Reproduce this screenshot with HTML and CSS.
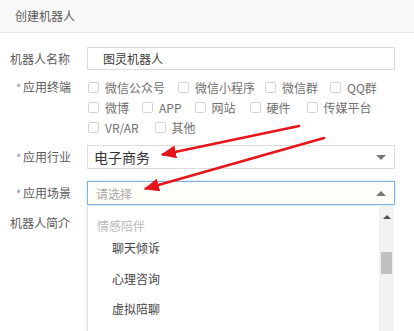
FILE: index.html
```html
<!DOCTYPE html>
<html lang="zh">
<head>
<meta charset="utf-8">
<link rel="stylesheet" href="styles.css">
</head>
<body>
<div class="page">
  <div class="header">创建机器人</div>
  <div class="form">
    <div class="row row-name">
      <div class="label">机器人名称</div>
      <div class="field"><div class="input">图灵机器人</div></div>
    </div>
    <div class="row row-terminal">
      <div class="label"><span class="req">*</span>应用终端</div>
      <div class="field checks">
        <div class="check-line">
          <label class="cb"><span class="box"></span>微信公众号</label>
          <label class="cb"><span class="box"></span>微信小程序</label>
          <label class="cb"><span class="box"></span>微信群</label>
          <label class="cb"><span class="box"></span>QQ群</label>
        </div>
        <div class="check-line">
          <label class="cb"><span class="box"></span>微博</label>
          <label class="cb"><span class="box"></span>APP</label>
          <label class="cb"><span class="box"></span>网站</label>
          <label class="cb"><span class="box"></span>硬件</label>
          <label class="cb"><span class="box"></span>传媒平台</label>
        </div>
        <div class="check-line">
          <label class="cb"><span class="box"></span>VR/AR</label>
          <label class="cb"><span class="box"></span>其他</label>
        </div>
      </div>
    </div>
    <div class="row row-industry">
      <div class="label"><span class="req">*</span>应用行业</div>
      <div class="field">
        <div class="select"><span class="value">电子商务</span><span class="caret down"></span></div>
      </div>
    </div>
    <div class="row row-scene">
      <div class="label"><span class="req">*</span>应用场景</div>
      <div class="field">
        <div class="select focused"><span class="placeholder">请选择</span><span class="caret up"></span></div>
        <div class="dropdown">
          <div class="options">
            <div class="group">情感陪伴</div>
            <div class="option">聊天倾诉</div>
            <div class="option">心理咨询</div>
            <div class="option">虚拟陪聊</div>
          </div>
          <div class="scrollbar">
            <span class="sb-up"></span>
            <span class="sb-thumb"></span>
          </div>
        </div>
      </div>
    </div>
    <div class="row row-intro">
      <div class="label">机器人简介</div>
      <div class="field"></div>
    </div>
  </div>
  <svg class="arrows" width="414" height="331" viewBox="0 0 414 331">
    <defs>
      <marker id="head" markerWidth="6" markerHeight="5" refX="5" refY="2.5" orient="auto" markerUnits="strokeWidth">
        <path d="M0,0 L6,2.5 L0,5 Z" fill="#e8141b"/>
      </marker>
    </defs>
    <line x1="299" y1="126" x2="163" y2="154.5" stroke="#e8141b" stroke-width="2.6" stroke-linecap="round" marker-end="url(#head)"/>
    <line x1="324" y1="138" x2="146" y2="188.5" stroke="#e8141b" stroke-width="2.6" stroke-linecap="round" marker-end="url(#head)"/>
  </svg>
</div>
</body>
</html>
```
FILE: styles.css
```css
* { box-sizing: border-box; }
html, body { margin: 0; padding: 0; background: #fff; }
body {
  font-family: "Noto Sans CJK SC", "Noto Sans", "Liberation Sans", sans-serif;
  font-size: 12px;
  color: #5a5a5a;
  width: 414px;
  height: 331px;
  overflow: hidden;
}
.page { position: relative; width: 414px; height: 331px; overflow: hidden; }
.header {
  height: 33px;
  line-height: 32px;
  padding-left: 15px;
  background: #f8f8f8;
  border-bottom: 1px solid #e8e8e8;
  color: #5a5a5a;
  font-size: 12px;
}
.form { padding: 14px 19px 0 10px; }
.row { display: grid; grid-template-columns: 77px 1fr; align-items: center; }
.label { font-size: 12px; color: #5a5a5a; line-height: 20px; white-space: nowrap; }
.req { color: #7a8ea8; display: inline-block; width: 7px; margin-left: 6px; font-size: 11px; }
.field { position: relative; }
.input {
  height: 23px;
  line-height: 21px;
  border: 1px solid #ddd;
  padding-left: 15px;
  color: #3a3a3a;
  font-size: 12px;
}
.row-terminal { margin-top: 7px; align-items: start; }
.checks { display: flex; flex-direction: column; }
.check-line { display: flex; height: 20px; align-items: center; }
.cb { display: flex; align-items: center; color: #707070; font-size: 12px; margin-right: 12px; white-space: nowrap; }
.box {
  width: 11px; height: 11px;
  border: 1px solid #d4d4d4;
  border-radius: 2px;
  background: #fff;
  margin: 0 6px 0 1px;
}
.check-line:first-child .cb:nth-child(2) { margin-right: 9px; }
.check-line:first-child .cb:nth-child(3) { margin-right: 11px; }
.check-line:nth-child(2) .cb:nth-child(3) { margin-right: 13px; }
.check-line:nth-child(2) .cb:nth-child(4) { margin-right: 15px; }
.check-line:nth-child(3) .cb:first-child { margin-right: 15px; }
.row-industry { margin-top: 8px; }
.row-scene { margin-top: 12px; }
.select {
  height: 24px;
  border: 1px solid #ddd;
  display: flex;
  align-items: center;
  justify-content: space-between;
  padding: 0 8px 0 6px;
  background: #fff;
}
.select .value { color: #333; font-size: 14px; }
.select.focused {
  border-color: #7fb3e0;
  background: #fffef8;
  box-shadow: 0 0 2px rgba(102,175,233,0.5);
  padding-left: 8px;
}
.placeholder { color: #a8a8a8; font-size: 12px; }
.caret { width: 0; height: 0; border-left: 5px solid transparent; border-right: 5px solid transparent; }
.caret.down { border-top: 5px solid #777; }
.caret.up { border-bottom: 5px solid #777; }
.row-intro { margin-top: 8px; }
.dropdown {
  position: absolute;
  left: 0; right: 0;
  top: 25px;
  height: 140px;
  background: #fff;
  border-left: 1px solid #e2e2e2;
  box-shadow: -1px 1px 3px rgba(0,0,0,0.08);
  display: flex;
  z-index: 5;
}
.options { flex: 1; padding-top: 10px; }
.group { color: #bbb; font-size: 12px; padding-left: 9px; height: 20px; line-height: 20px; margin-bottom: 2px; }
.option { color: #454545; font-size: 12px; padding-left: 24px; height: 30.5px; line-height: 20px; }
.scrollbar {
  width: 15px;
  margin-right: 1px;
  background: #f1f1f1;
  position: relative;
}
.sb-up {
  position: absolute;
  top: 9px; left: 4px;
  border-left: 4px solid transparent;
  border-right: 4px solid transparent;
  border-bottom: 4px solid #505050;
}
.sb-thumb {
  position: absolute;
  top: 46px; left: 2px;
  width: 11px; height: 22px;
  background: #c1c1c1;
}
.arrows { position: absolute; left: 0; top: 0; pointer-events: none; z-index: 10; }
```
